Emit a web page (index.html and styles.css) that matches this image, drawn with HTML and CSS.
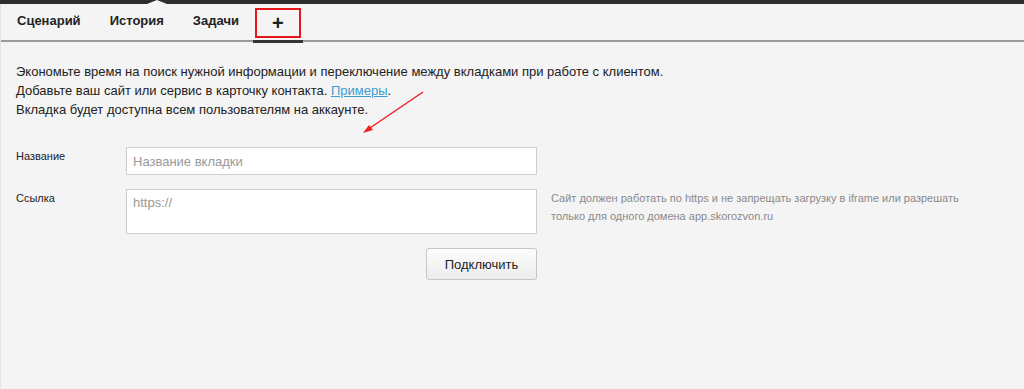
FILE: index.html
```html
<!DOCTYPE html>
<html>
<head>
    <title>Вкладки</title>
    <link rel="stylesheet" href="styles.css">
</head>
<body>
    <div class="topbar">
        <span class="notch"></span>
    </div>
    <div class="page">
        <div class="tabs">
            <div class="tab">Сценарий</div>
            <div class="tab">История</div>
            <div class="tab">Задачи</div>
            <div class="tab tab-add active">
                <span class="add-box">+</span>
            </div>
        </div>

        <div class="intro">
            <p>Экономьте время на поиск нужной информации и переключение между вкладками при работе с клиентом.</p>
            <p>Добавьте ваш сайт или сервис в карточку контакта. <a href="#">Примеры</a>.</p>
            <p>Вкладка будет доступна всем пользователям на аккаунте.</p>
        </div>

        <form class="form">
            <label class="label" for="name">Название</label>
            <input class="field" id="name" type="text" placeholder="Название вкладки">
            <div></div>

            <label class="label" for="url">Ссылка</label>
            <textarea class="field area" id="url">https://</textarea>
            <div class="hint">Сайт должен работать по https и не запрещать загрузку в iframe или разрешать только для одного домена app.skorozvon.ru</div>

            <div></div>
            <div class="actions">
                <button class="button" type="button">Подключить</button>
            </div>
        </form>

        <svg class="arrow" width="70" height="50" viewBox="0 0 70 50">
            <line x1="64" y1="4" x2="8" y2="42" stroke="#f02020" stroke-width="1.5"/>
            <polygon points="4,45 10,37 14,42" fill="#f02020"/>
        </svg>
    </div>
</body>
</html>
```

FILE: styles.css
```css
body {
    margin: 0;
    background-color: #f4f4f4;
    font-family: "Liberation Sans", Arial, sans-serif;
    color: #222;
}

.topbar {
    position: relative;
    height: 4px;
    background-color: #2e2e2e;
}

.notch {
    position: absolute;
    left: 147px;
    top: 0;
    border-left: 10px solid transparent;
    border-right: 10px solid transparent;
    border-bottom: 4px solid #f4f4f4;
}

.page {
    position: relative;
    min-height: 385px;
    border-left: 1px solid #e2e2e2;
}

.tabs {
    display: flex;
    height: 36px;
    border-bottom: 2px solid #9a9a9a;
    padding-left: 1px;
}

.tab {
    padding: 0 14px 0 15px;
    font-size: 13px;
    font-weight: bold;
    color: #222;
    line-height: 34px;
}

.tab-add {
    padding: 0 0 0 1px;
    width: 49px;
    position: relative;
}

.tab-add.active {
    border-bottom: 3px solid #333;
    margin-bottom: -3px;
}

.add-box {
    display: block;
    margin: 4px 0 0 1px;
    width: 42px;
    height: 26px;
    border: 2px solid #e8141c;
    text-align: center;
    font-size: 20px;
    line-height: 26px;
    color: #222;
}

.intro {
    padding: 20px 0 0 15px;
    font-size: 13px;
    line-height: 19px;
}

.intro p {
    margin: 0;
}

.intro a {
    color: #3d9ccf;
}

.form {
    display: grid;
    grid-template-columns: 96px 411px 416px;
    column-gap: 14px;
    row-gap: 14px;
    padding: 28px 0 0 15px;
}

.label {
    font-size: 11px;
    padding-top: 3px;
    color: #222;
}

.field {
    box-sizing: border-box;
    height: 28px;
    margin: 0;
    padding: 4px 6px;
    border: 1px solid #cfcfcf;
    background-color: #fff;
    font-family: "Liberation Sans", Arial, sans-serif;
    font-size: 13px;
    color: #999;
    outline: none;
}

.field::placeholder {
    color: #999;
}

.area {
    height: 45px;
    resize: none;
    padding-top: 5px;
}

.hint {
    font-size: 11px;
    line-height: 18px;
    color: #8a8a8a;
}

.actions {
    display: flex;
    justify-content: flex-end;
}

.button {
    width: 111px;
    height: 32px;
    border: 1px solid #c6c6c6;
    border-radius: 3px;
    background: linear-gradient(#fdfdfd, #ececec);
    font-family: "Liberation Sans", Arial, sans-serif;
    font-size: 13px;
    color: #222;
    cursor: pointer;
}

.arrow {
    position: absolute;
    left: 358px;
    top: 84px;
}
```
